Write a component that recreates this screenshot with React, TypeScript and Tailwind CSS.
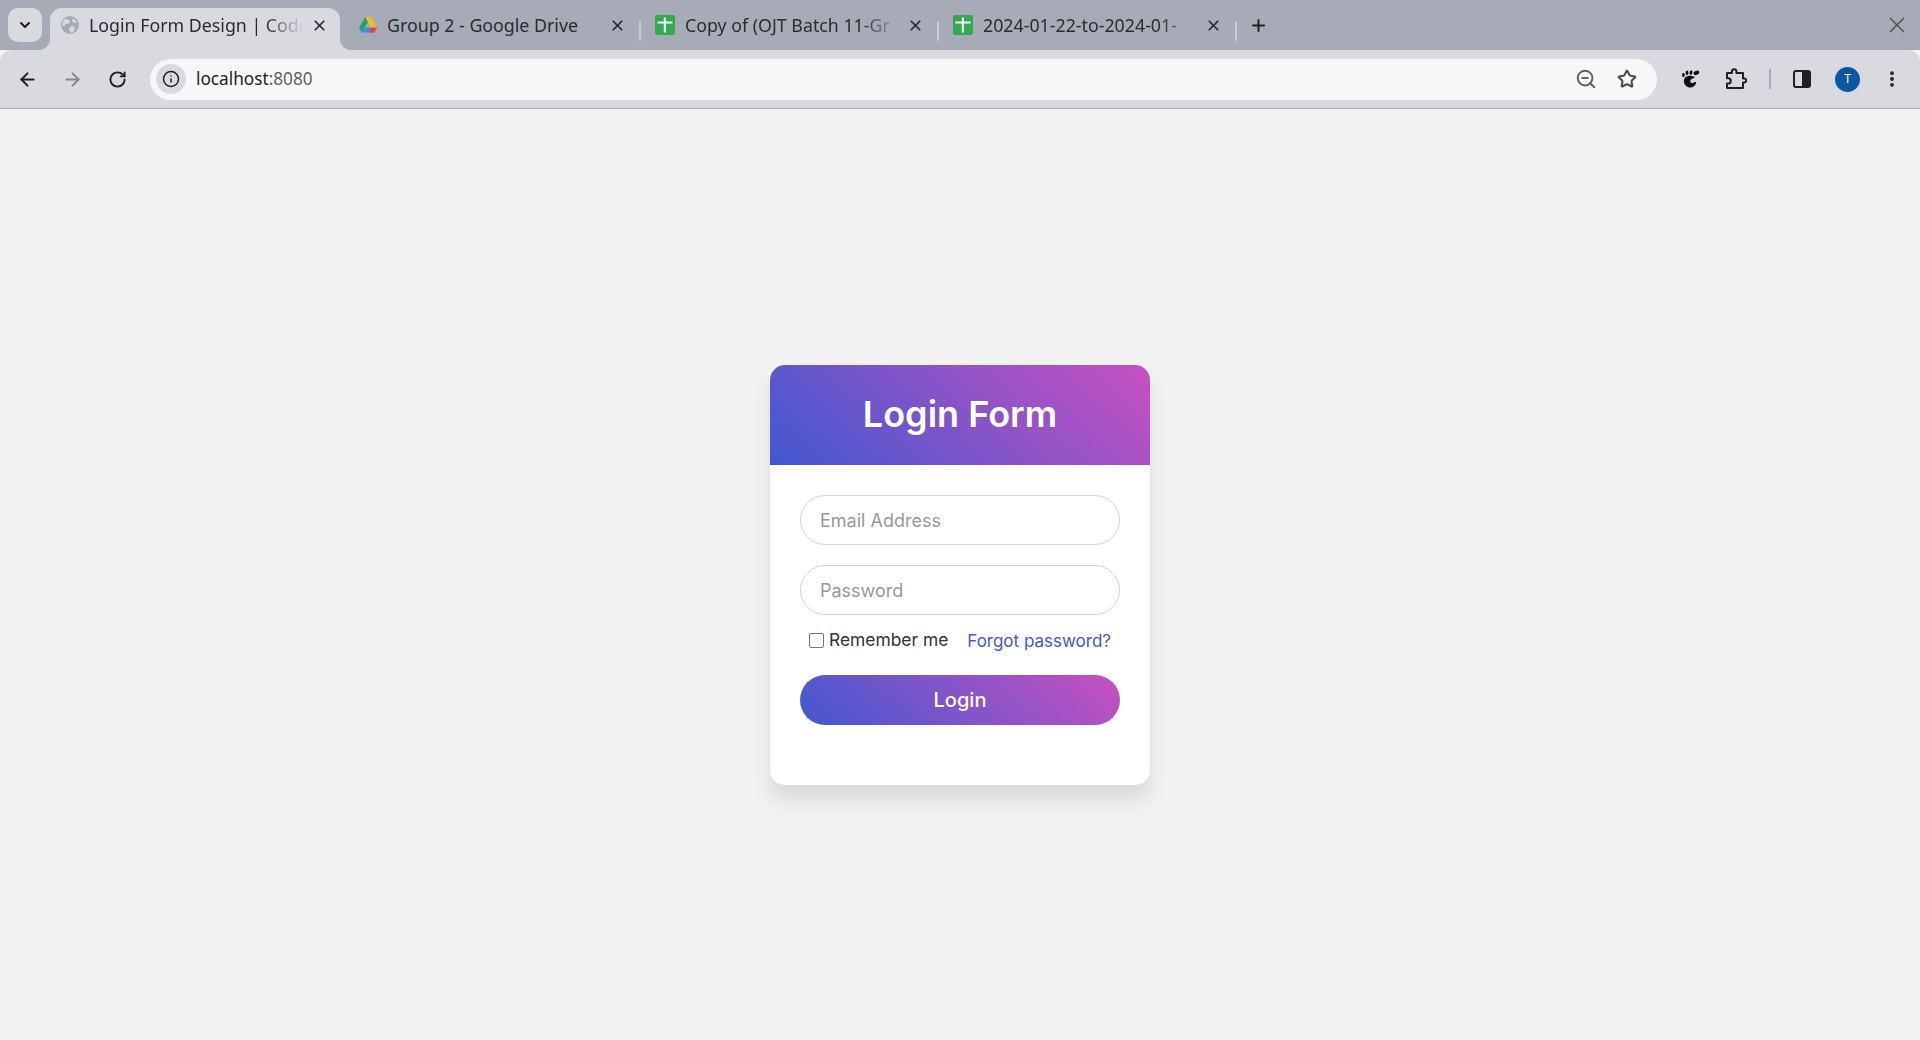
import { useState } from "react";
import { ArrowLeft, ArrowRight, ChevronDown, EllipsisVertical, Info, Plus, RotateCw, Star, X, ZoomOut } from "lucide-react";

const CHROME_FONT = "font-['Noto_Sans',sans-serif]";
const PAGE_FONT = "font-['Inter',sans-serif]";

function GlobeIcon() {
  return (
    <svg width="18" height="18" viewBox="0 0 18 18" className="shrink-0">
      <circle cx="9" cy="9" r="9" fill="#a6abb0" />
      <path d="M5 2.5 9 5 8 7.5 5 8 3 10 1 8.5 2.5 4.5ZM10 10l4 1-1.5 4.5-3 1.5L8 13ZM12 2l4 4-2.5 1-2.5-2Z" fill="#d8dae0" />
    </svg>
  );
}

function DriveIcon() {
  return (
    <svg width="18" height="17" viewBox="0 0 18 17" className="shrink-0">
      <path d="M6.2 0h5.6L18 10.8h-5.6Z" fill="#f9bb12" />
      <path d="M6.2 0 0 10.8 2.8 15.6 8.9 5Z" fill="#1fa463" />
      <path d="M5.6 10.8H18L15.2 15.6H2.8Z" fill="#4285f4" />
      <path d="M12.4 10.8H18L15.2 15.6H10Z" fill="#ea4335" />
    </svg>
  );
}

function SheetsIcon() {
  return (
    <svg width="20" height="20" viewBox="0 0 20 20" className="shrink-0">
      <rect width="20" height="20" rx="2" fill="#34a853" />
      <path d="M2.5 6.5h15v2h-15ZM8.8 2.5h2v15h-2Z" fill="#fff" />
    </svg>
  );
}

function FootIcon() {
  return (
    <svg width="20" height="20" viewBox="0 0 20 20" className="shrink-0">
      <g fill="#111">
        <ellipse cx="2.4" cy="6" rx="1.4" ry="2.1" />
        <ellipse cx="6" cy="3.8" rx="1.4" ry="2.2" />
        <ellipse cx="10" cy="3.6" rx="1.4" ry="2.3" transform="rotate(15 10 3.6)" />
        <ellipse cx="15.4" cy="3.8" rx="3" ry="2" transform="rotate(-25 15.4 3.8)" />
        <path d="M4 8.5c3-2.5 8-2.5 10 .2-2.6.4-4.8 1.6-4.8 3.6 0 1.4 1.6 2 3.2 1.4l2.6-1c.4 3-2.4 5.8-6 5.8-4.5 0-8-5.6-5-10Z" />
      </g>
    </svg>
  );
}

function PuzzleIcon() {
  return (
    <svg width="22" height="22" viewBox="0 0 22 22" fill="none" stroke="#1f2023" strokeWidth="2" strokeLinejoin="round" className="shrink-0">
      <path d="M2 5h5V3.5a2.2 2.2 0 0 1 4.4 0V5H18v5.4h1.2a2 2 0 0 1 0 4H18V20H2v-4.5h1.2a2.6 2.6 0 0 0 0-5.2H2Z" />
    </svg>
  );
}

function SidePanelIcon() {
  return (
    <svg width="18" height="18" viewBox="0 0 18 18" className="shrink-0">
      <rect x="1" y="1" width="16" height="16" rx="2" fill="none" stroke="#1f2023" strokeWidth="2" />
      <rect x="9" y="1" width="8" height="16" fill="#1f2023" />
    </svg>
  );
}

function Tab({ title, icon, className, fade, active }: { title: string; icon: React.ReactNode; className: string; fade?: boolean; active?: boolean }) {
  return (
    <div className={`relative flex h-full items-center pb-2 ${className}`}>
      {active && (
        <>
          <span className="absolute -left-3 bottom-0 h-3 w-3 bg-[radial-gradient(circle_at_0_0,transparent_12px,#d8dae0_12.5px)]" />
          <span className="absolute -right-3 bottom-0 h-3 w-3 bg-[radial-gradient(circle_at_100%_0,transparent_12px,#d8dae0_12.5px)]" />
        </>
      )}
      {icon}
      <div className={`ml-[10px] min-w-0 flex-1 whitespace-nowrap text-[17.8px] text-[#2a2c31] ${fade ? "[mask-image:linear-gradient(to_right,black_82%,transparent)]" : ""}`}>
        {title}
      </div>
      <X size={17} strokeWidth={2.4} className="ml-2 shrink-0 text-[#2a2c31]" />
      {!active && <span className="absolute right-0 top-[13px] h-[20px] w-[2px] rounded bg-[#c9cbd3]" />}
    </div>
  );
}

export default function App() {
  const [remember, setRemember] = useState(false);

  return (
    <div className="flex h-[1040px] flex-col overflow-hidden bg-[#f2f2f2]">
      {/* Tab strip */}
      <div className={`flex h-[50px] shrink-0 bg-[#a7abb7] pt-2 ${CHROME_FONT}`}>
        <div className="ml-2 flex h-[34px] w-[34px] items-center justify-center rounded-[10px] bg-[#d8dae0]">
          <ChevronDown size={16} strokeWidth={3} className="text-[#1f2023]" />
        </div>
        <div className="ml-2 flex h-full">
          <Tab active fade title="Login Form Design | Code" icon={<GlobeIcon />} className="w-[290px] rounded-t-xl bg-[#d8dae0] pl-[11px] pr-[12px]" />
          <Tab title="Group 2 - Google Drive" icon={<DriveIcon />} className="w-[301px] pl-[19px] pr-[15px]" />
          <Tab fade title="Copy of (OJT Batch 11-Gr" icon={<SheetsIcon />} className="w-[298px] pl-[14px] pr-[15px]" />
          <Tab fade title="2024-01-22-to-2024-01-" icon={<SheetsIcon />} className="w-[298px] pl-[14px] pr-[15px]" />
        </div>
        <div className="ml-[12px] flex h-[34px] items-center">
          <Plus size={19} strokeWidth={2.5} className="text-[#1f2023]" />
        </div>
        <div className="ml-auto mr-[10px] flex h-[34px] items-center">
          <X size={26} strokeWidth={1.6} className="text-[#55585f]" />
        </div>
      </div>

      {/* Toolbar */}
      <div className={`flex h-[58px] shrink-0 items-center rounded-t-xl bg-[#d8dae0] ${CHROME_FONT}`}>
        <ArrowLeft size={21} strokeWidth={2.2} className="ml-[17px] text-[#1f2023]" />
        <ArrowRight size={21} strokeWidth={2.2} className="ml-[24px] text-[#85878d]" />
        <RotateCw size={19} strokeWidth={2.4} className="ml-[25px] text-[#1f2023]" />
        <div className="ml-[23px] flex h-[41px] w-[1507px] items-center rounded-full bg-[#f6f7f9] pl-[6px] pr-[20px]">
          <div className="flex h-[30px] w-[30px] items-center justify-center rounded-full bg-[#d8dae0]">
            <Info size={18} strokeWidth={2} className="text-[#1f2023]" />
          </div>
          <div className="ml-[10px] text-[17.2px] text-[#1f2023]">
            localhost<span className="text-[#5f6368]">:8080</span>
          </div>
          <ZoomOut size={22} strokeWidth={2.2} className="ml-auto text-[#5f6368]" />
          <Star size={20} strokeWidth={2.5} className="ml-[20px] text-[#4a4c52]" />
        </div>
        <div className="ml-[24px]"><FootIcon /></div>
        <div className="ml-[24px]"><PuzzleIcon /></div>
        <span className="ml-[22px] h-[20px] w-[2px] bg-[#a7abb7]" />
        <div className="ml-[22px]"><SidePanelIcon /></div>
        <div className="ml-[24px] flex h-[25px] w-[25px] items-center justify-center rounded-full bg-[#0b57a4] text-[12px] text-white">T</div>
        <EllipsisVertical size={20} strokeWidth={2.6} className="ml-[22px] text-[#1f2023]" />
      </div>
      <div className="h-px shrink-0 bg-[#a9abb0]" />

      {/* Page */}
      <main className={`flex flex-1 items-center justify-center pt-px ${PAGE_FONT}`}>
        <div className="w-[380px] overflow-hidden rounded-[15px] bg-white shadow-[0px_15px_20px_rgba(0,0,0,0.1)]">
          <div className="flex h-[100px] items-center justify-center bg-[linear-gradient(43deg,#4158d0,#c850c0)] pb-[2px]">
            <h1 className="text-[36px] font-semibold text-white">Login Form</h1>
          </div>
          <form className="flex flex-col px-[30px] pt-[30px] pb-[60px]">
            <input
              type="text"
              placeholder="Email Address"
              className="h-[50px] w-full rounded-full border border-[#d3d3d3] px-[19px] text-[18px] text-[#333] outline-none placeholder:text-[#999]"
            />
            <input
              type="password"
              placeholder="Password"
              className="mt-[20px] h-[50px] w-full rounded-full border border-[#d3d3d3] px-[19px] text-[18px] text-[#333] outline-none placeholder:text-[#999]"
            />
            <div className="mt-[13px] flex h-[25px] items-center">
              <input
                type="checkbox"
                checked={remember}
                onChange={(e) => setRemember(e.target.checked)}
                className="ml-[9px] h-[15px] w-[15px] appearance-none rounded-[2px] border border-[#767676] bg-white"
              />
              <label className="ml-[5px] text-[17.4px] text-[#333]">Remember me</label>
              <a href="#" className="ml-auto mr-[9px] text-[17px] leading-[26px] text-[#4158d0]">Forgot password?</a>
            </div>
            <button
              type="button"
              className="mt-[22px] h-[50px] w-full rounded-full bg-[linear-gradient(43deg,#4158d0,#c850c0)] text-[20px] font-medium text-white"
            >
              Login
            </button>
          </form>
        </div>
      </main>
    </div>
  );
}
